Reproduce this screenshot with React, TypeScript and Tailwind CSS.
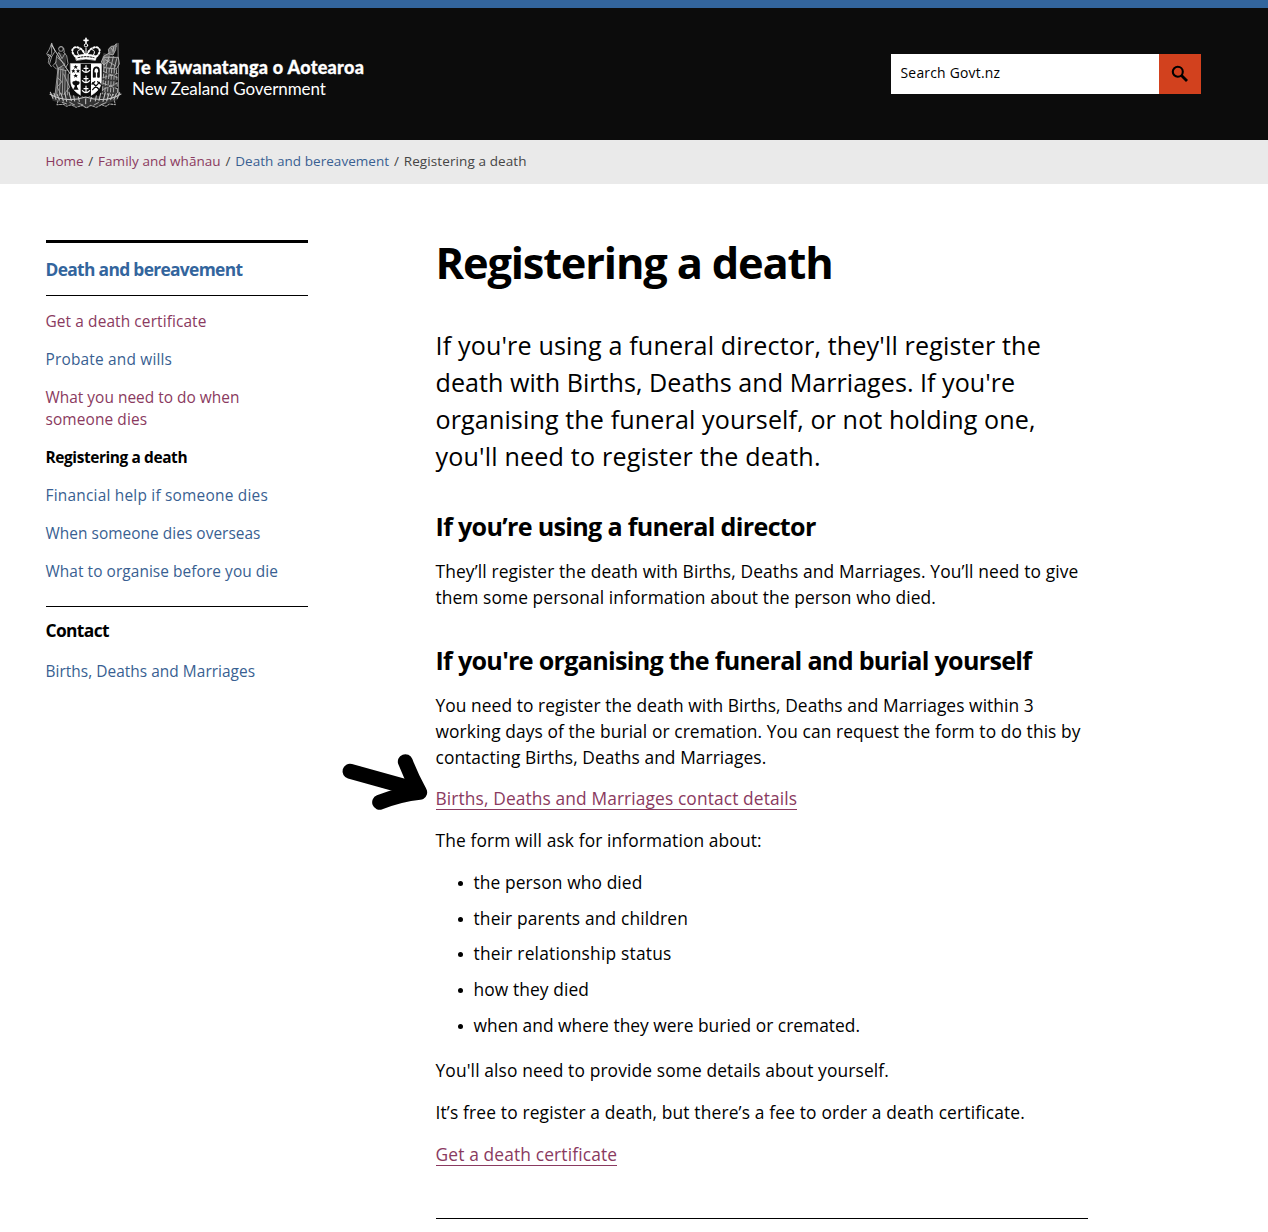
type Line = [text: string, tracking: string];

function Lines({ lines }: { lines: Line[] }) {
  return (
    <>
      {lines.map(([text, tracking]) => (
        <span key={text} className={`block whitespace-nowrap ${tracking}`}>
          {text}
        </span>
      ))}
    </>
  );
}

function Crest() {
  return (
    <svg viewBox="27 21 234 216" className="h-[72px] w-[78px] shrink-0" fill="none" stroke="#fff" strokeLinecap="round" strokeLinejoin="round">
      {/* figures' robes */}
      <path d="M67 66l-9 30l6 40l-7 60h44v-50l-13-30l4-40z" fill="#333" stroke="none" />
      <path d="M203 68l37 14l4 20l-6 15l6 78h-48l5-80l-4-26z" fill="#3a3a3a" stroke="none" />
      <path d="M44 190l60 6l46 8l52-8l50-8l-8 22l-40 14l-54 8l-56-8l-44-12z" fill="#333" stroke="none" />
      {/* crown */}
      <path d="M150 25v14M144 31h12" strokeWidth="5" />
      <circle cx="150" cy="46" r="5" strokeWidth="3" />
      <path d="M118 79C100 62 112 47 127 53C138 56 143 65 148 76M182 79C200 62 188 47 173 53C162 56 157 65 152 76" strokeWidth="6" strokeDasharray="4 6" />
      <path d="M127 74q-7-12 4-15M173 74q7-12-4-15M150 55v20" strokeWidth="3" />
      <path d="M118 78q32-10 64 0l-4 13q-28-8-56 0z" fill="#fff" strokeWidth="2" />
      <path d="M126 83q24-6 48 0" stroke="#0c0c0c" strokeWidth="3" strokeDasharray="5 4" />
      {/* shield */}
      <path d="M104 101h92v52c0 25-20 39-46 51c-26-12-46-26-46-51z" fill="#fff" strokeWidth="2" />
      <path d="M134 101h31v96l-15 7l-16-7z" fill="#0c0c0c" stroke="none" />
      <g strokeWidth="3.5">
        <path d="M139 121q11 12 22 0M150 107v17M144 115h12" />
        <path d="M139 152q11 12 22 0M150 138v17M144 146h12" />
        <path d="M139 182q11 12 22 0M150 168v17M144 176h12" />
      </g>
      <g fill="#0c0c0c" stroke="none">
        <path d="M119 104l2 5h5l-4 3 2 5-5-3-5 3 2-5-4-3h5zM112 117l2 4h4l-3 3 1 5-4-3-4 3 1-5-3-3h4zM126 117l2 4h4l-3 3 1 5-4-3-4 3 1-5-3-3h4zM119 131l2 4h5l-4 3 2 5-5-3-5 3 2-5-4-3h5z" />
        <path d="M109 159q0-7 6-5q5-5 9 0q7-2 7 5q-1 6-8 7v4l5 9h-17l5-9v-4q-6-1-7-7z" />
      </g>
      <path d="M173 141v-19q1-10 8-10q8 0 8 10v19M177 129v12M186 129v12" stroke="#0c0c0c" strokeWidth="5" />
      <path d="M170 158l20 21M190 157l-20 22M168 162l8-7M185 155l8 7" stroke="#0c0c0c" strokeWidth="4" />
      {/* left supporter with flag */}
      <g stroke="#a9a9a9" strokeWidth="2.6">
        <path d="M47 40l-7 18l-8 13l8 12l-3 15l9 12M47 40l10 24l-10 16l-10-7M47 40v31l-9 16M35 73l12 7l-6 20" />
        <path d="M47 45l27 44l29 43" stroke="#ddd" />
        <circle cx="75" cy="57" r="7" />
        <path d="M68 54q7-9 15 0l2 12M69 66l-7 11l-3 23l7 14l-3 28l-6 55M82 66l10 11l4 24l-7 12" />
        <path d="M70 70l8 16l9-16M65 83l22 20l-22 13l26 6M68 114l-6 82M75 111l-5 85M81 113l-2 80M88 121l-2 72M97 132l-3 63M64 143l14 12l-15 16l12 22M91 115l13 19M83 132l18 39l-17 22M60 96l-9 11l10 10" />
      </g>
      {/* right supporter with taiaha */}
      <g stroke="#b3b3b3" strokeWidth="2.8">
        <path d="M246 40l2 154M242 48l-9 10" stroke="#888" />
        <path d="M218 57q7-12 17-9l6-7l-2 18l-8 16l-11-3zM225 54l6 8M233 51l-2 15M222 68l-18 10l-8 18l8 9l17-15" fill="#666" />
        <path d="M205 82h42l3 20l-9 15l-36-4zM208 89l31 19M219 80l-9 31M232 80l-8 34M243 84l-8 29" />
        <path d="M204 113l-5 78M212 116l-6 76M220 115l-6 80M227 117l-4 80M235 117l-3 78M241 119l4 72M202 124l42 19M201 143l43-12M202 160l41 16M202 178l40-18" strokeDasharray="12 7" />
      </g>
      {/* fern fronds and scroll */}
      <g stroke="#c4c4c4" strokeWidth="3.2">
        <path d="M42 193q48 27 107 8q61 19 106-9" />
        <path d="M43 187l8 18M54 190l6 18M64 194l6 16M75 190l7 23M87 190l5 24M99 187l7 25M113 197l3 16M127 201l3 13M251 188l-7 17M241 191l-7 17M230 193l-6 16M219 190l-7 23M208 188l-7 26M194 190l-5 22M181 197l-3 16M166 202l-3 12M149 207v14" />
        <path d="M66 212l-3 12l20-1l9 6l14-5l14 8l19-6l12 8l13-8l17 6l16-8l13 5l10-7l18 2l-3-12" stroke="#a0a0a0" strokeDasharray="6 4" />
        <path d="M79 217l13 5M101 217l15 8M126 219l15 6M174 225l13-7M195 224l15-6" strokeWidth="2.5" />
      </g>
    </svg>
  );
}

const visited = "text-[#8a3a60]";
const link = "text-[#395f92]";

const sideLinks: { lines: Line[]; color: string }[] = [
  { lines: [["Get a death certificate", "tracking-[0.1px]"]], color: visited },
  { lines: [["Probate and wills", "tracking-[0.18px]"]], color: link },
  { lines: [["What you need to do when", "tracking-[0.01px]"], ["someone dies", "tracking-[0.1px]"]], color: visited },
  { lines: [["Registering a death", "tracking-[-0.4px]"]], color: "font-bold text-black" },
  { lines: [["Financial help if someone dies", "tracking-[0.21px]"]], color: link },
  { lines: [["When someone dies overseas", "tracking-[0.03px]"]], color: link },
  { lines: [["What to organise before you die", "tracking-[0.06px]"]], color: link },
];

const details: Line[] = [
  ["the person who died", "tracking-[0.11px]"],
  ["their parents and children", "tracking-[0.15px]"],
  ["their relationship status", "tracking-[0.21px]"],
  ["how they died", "tracking-[0.1px]"],
  ["when and where they were buried or cremated.", "tracking-[0.02px]"],
];

export default function App() {
  return (
    <div className="h-[1232px] overflow-hidden bg-white font-['Open_Sans',sans-serif] text-black">
      <header className="flex h-[140px] items-start justify-between border-t-8 border-[#33659d] bg-[#0c0c0c] pr-[67px] pl-[45px]">
        <div className="flex pt-[29px] text-white">
          <Crest />
          <div className="ml-[9px] pt-5 font-['Lato',sans-serif] whitespace-nowrap">
            <div className="text-[18px] leading-[21px] font-black tracking-[0.29px] [-webkit-text-stroke:0.3px_#fff]">Te Kāwanatanga o Aotearoa</div>
            <div className="text-[17px] leading-[21px] tracking-[-0.07px]">New Zealand Government</div>
          </div>
        </div>
        <form className="mt-[46px] flex h-10 w-[310px]">
          <div className="flex flex-1 items-center bg-white pb-px pl-[9.5px] text-[13.9px] tracking-[0.23px]">Search Govt.nz</div>
          <button type="button" aria-label="Search" className="flex w-[42px] items-center justify-center bg-[#d2411e] text-black">
            <svg viewBox="0 0 18 18" className="size-[18px]" fill="none" stroke="currentColor">
              <circle cx="6.8" cy="6.8" r="5" strokeWidth="2.1" />
              <path d="M10.5 10.5L16 16" strokeWidth="2.8" />
            </svg>
          </button>
        </form>
      </header>

      <nav className="flex h-11 items-center gap-[4.8px] bg-[#eaeaea] pb-px pl-[45.5px] text-[13.5px] whitespace-nowrap text-[#454545]">
        <a className={`${visited} tracking-[-0.04px]`}>Home</a>
        <span>/</span>
        <a className={`${visited} tracking-[0.04px]`}>Family and whānau</a>
        <span>/</span>
        <a className={`${link} tracking-[0.05px]`}>Death and bereavement</a>
        <span>/</span>
        <span className="tracking-[0.1px]">Registering a death</span>
      </nav>

      <div className="flex pl-[45.5px]">
        <aside className="mt-14 w-[262.5px] shrink-0">
          <div className="h-14 border-t-3 border-b border-black pt-[14px] text-[17.4px] leading-6 font-bold">
            <a className="tracking-[-0.68px] text-[#33659d]">Death and bereavement</a>
          </div>
          <ul className="flex h-[310px] flex-col gap-4 pt-[14px] text-[15.44px] leading-[22px]">
            {sideLinks.map(({ lines, color }) => (
              <li key={lines[0][0]} className={color}>
                <Lines lines={lines} />
              </li>
            ))}
          </ul>
          <div className="border-t border-black pt-[11px]">
            <h2 className="text-[17.4px] leading-6 font-bold tracking-[-0.64px]">Contact</h2>
            <a className={`mt-[18px] block text-[15.44px] leading-[22px] tracking-[0.03px] ${link}`}>Births, Deaths and Marriages</a>
          </div>
        </aside>

        <main className="mt-[52px] ml-[127.5px] w-[652.5px] text-[17.37px] leading-[26px]">
          <h1 className="text-[43.4px] leading-[54px] font-bold tracking-[-1.18px]">Registering a death</h1>
          <p className="mt-[37px] text-[25.1px] leading-[37px]">
            <Lines
              lines={[
                ["If you're using a funeral director, they'll register the", "tracking-[0.15px]"],
                ["death with Births, Deaths and Marriages. If you're", "tracking-[0.03px]"],
                ["organising the funeral yourself, or not holding one,", "tracking-[0.12px]"],
                ["you'll need to register the death.", "tracking-[0.18px]"],
              ]}
            />
          </p>

          <h2 className="mt-[35px] text-[25.1px] leading-8 font-bold tracking-[-0.68px]">If you’re using a funeral director</h2>
          <p className="mt-4">
            <Lines
              lines={[
                ["They’ll register the death with Births, Deaths and Marriages. You’ll need to give", "tracking-[0.13px]"],
                ["them some personal information about the person who died.", "tracking-[0.09px]"],
              ]}
            />
          </p>

          <h2 className="mt-[34px] text-[25.1px] leading-8 font-bold tracking-[-0.7px]">If you're organising the funeral and burial yourself</h2>
          <p className="mt-4">
            <Lines
              lines={[
                ["You need to register the death with Births, Deaths and Marriages within 3", "tracking-[0.07px]"],
                ["working days of the burial or cremation. You can request the form to do this by", "tracking-[0.09px]"],
                ["contacting Births, Deaths and Marriages.", "tracking-[0.07px]"],
              ]}
            />
          </p>
          <div className="relative mt-[15px] flex">
            <svg viewBox="0 0 360 240" className="absolute -top-[45px] -left-[106px] h-20 w-[120px]" fill="none" stroke="#000" strokeLinecap="round" strokeLinejoin="round">
              <path d="M60 94L265 151" strokeWidth="45" />
              <path d="M226 65Q244 112 269 157Q210 163 149 187" strokeWidth="45" />
              <path d="M160 135L245 150L240 130Z" fill="#000" strokeWidth="16" />
            </svg>
            <a className={`h-[25px] border-b border-current tracking-[0.11px] ${visited}`}>Births, Deaths and Marriages contact details</a>
          </div>
          <p className="mt-[17px] tracking-[0.12px]">The form will ask for information about:</p>
          <ul className="mt-4 flex flex-col gap-[9.7px]">
            {details.map(([text, tracking]) => (
              <li key={text} className={`flex items-center pl-[22px] ${tracking}`}>
                <span className="mt-[3px] mr-[11px] size-[5px] rounded-full bg-black" />
                {text}
              </li>
            ))}
          </ul>
          <p className="mt-[19.2px] tracking-[0.13px]">You'll also need to provide some details about yourself.</p>
          <p className="mt-4 tracking-[0.16px]">It’s free to register a death, but there’s a fee to order a death certificate.</p>
          <div className="mt-4 flex">
            <a className={`h-[25px] border-b border-current tracking-[0.14px] ${visited}`}>Get a death certificate</a>
          </div>
          <hr className="mt-[52px] border-black" />
        </main>
      </div>
    </div>
  );
}
